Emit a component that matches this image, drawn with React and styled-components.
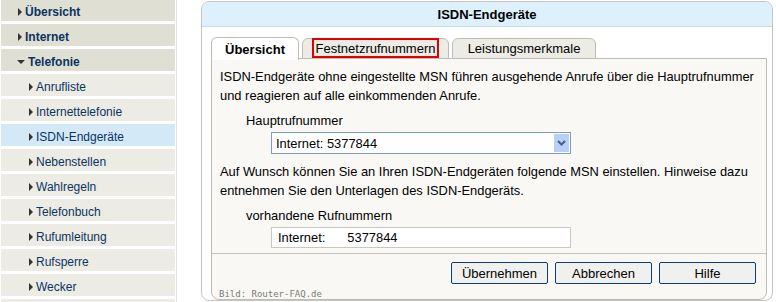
import React from 'react';
import styled, { createGlobalStyle } from 'styled-components';

const GlobalStyle = createGlobalStyle`
    html, body {
        margin: 0;
        padding: 0;
        background: #ffffff;
        overflow: hidden;
    }
    body {
        font-family: "Liberation Sans", Arial, sans-serif;
        font-size: 12px;
    }
`;

const Page = styled.div`
    display: flex;
    align-items: flex-start;
    width: 776px;
    height: 302px;
    overflow: hidden;
`;

const Sidebar = styled.nav`
    width: 174px;
    margin: -1px 0 0 1px;
    padding-right: 1px;
    border-right: 1px solid #e2e2da;
    display: flex;
    flex-direction: column;
    gap: 3px;
`;

const NavRow = styled.div`
    height: 22px;
    display: flex;
    align-items: center;
    padding: 3px 0 0 ${({ $sub }) => ($sub ? '28px' : '17px')};
    background: ${({ $sub, $active }) => ($active ? '#d3e9f8' : $sub ? '#ecebe4' : '#dfdfd3')};
    color: #0b3363;
    font-weight: ${({ $sub }) => ($sub ? 'normal' : 'bold')};
    font-size: 12px;
    box-sizing: border-box;
`;

const Arrow = styled.span`
    width: 0;
    height: 0;
    margin-right: 3px;
    ${({ $open }) => $open
        ? `border-left: 4px solid transparent; border-right: 4px solid transparent; border-top: 4px solid #333; margin-left: -1px;`
        : `border-top: 4px solid transparent; border-bottom: 4px solid transparent; border-left: 4px solid #333;`}
`;

const Panel = styled.section`
    margin: 1px 0 0 24px;
    width: 572px;
    height: 300px;
    box-sizing: border-box;
    border: 1px solid #c6c6c0;
    border-radius: 8px;
    background: #ffffff;
    display: flex;
    flex-direction: column;
    overflow: hidden;
`;

const PanelHeader = styled.header`
    height: 24px;
    background: #ddf0fb;
    border-bottom: 1px solid #c9dbe6;
    display: flex;
    align-items: center;
    justify-content: center;
    font-weight: bold;
    font-size: 13px;
    color: #000;
    flex-shrink: 0;
`;

const PanelBody = styled.div`
    padding: 10px 5px 1px 9px;
    flex: 1;
    display: flex;
    flex-direction: column;
`;

const TabBar = styled.div`
    display: flex;
    gap: 3px;
    height: 22px;
    position: relative;
    z-index: 1;
    margin-bottom: -1px;
`;

const Tab = styled.div`
    width: ${({ $w }) => $w}px;
    height: ${({ $active }) => ($active ? '23px' : '21px')};
    margin-top: ${({ $active }) => ($active ? '0' : '1px')};
    box-sizing: border-box;
    border: 1px solid #bdbdb5;
    border-bottom: ${({ $active }) => ($active ? 'none' : '1px solid #bdbdb5')};
    border-radius: 6px 6px 0 0;
    background: ${({ $active }) => ($active ? '#ffffff' : '#ecebe4')};
    display: flex;
    align-items: center;
    justify-content: center;
    font-size: 13px;
    font-weight: ${({ $active }) => ($active ? 'bold' : 'normal')};
    color: #000;
`;

const Highlight = styled.span`
    border: 2px solid #e00000;
    padding: 1px 2px;
    height: 20px;
    box-sizing: border-box;
    display: flex;
    align-items: center;
    margin-top: -1px;
`;

const TabFrame = styled.div`
    flex: 1;
    border: 1px solid #bdbdb5;
    border-radius: 0 0 8px 8px;
    background: #f9f8f5;
    display: flex;
    flex-direction: column;
`;

const TabContent = styled.div`
    height: 195px;
    box-sizing: border-box;
    border-bottom: 1px solid #c4c4bc;
    padding: 8px 2px 0 8px;
    font-size: 12.9px;
    line-height: 19px;
    color: #000;
`;

const Paragraph = styled.p`
    margin: ${({ $gap }) => ($gap ? '8px 0 0' : '0')};
`;

const FieldLabel = styled.div`
    margin: 6px 0 0 26px;
`;

const Select = styled.div`
    margin: 2px 0 0 51px;
    width: 300px;
    height: 22px;
    box-sizing: border-box;
    border: 1px solid #7f9db9;
    background: #fff;
    display: flex;
    align-items: center;
    padding-left: 4px;
    justify-content: space-between;
`;

const SelectButton = styled.div`
    width: 15px;
    height: 18px;
    margin-right: 1px;
    background: #b9d0f6;
    display: flex;
    align-items: center;
    justify-content: center;
`;

const ReadOnlyBox = styled.div`
    margin: 2px 0 0 51px;
    width: 300px;
    height: 21px;
    box-sizing: border-box;
    border: 1px solid #c8c8c2;
    background: #fff;
    display: flex;
    align-items: center;
    padding-left: 6px;
    gap: 22px;
`;

const Footer = styled.div`
    flex: 1;
    display: flex;
    flex-direction: column;
    padding: 8px 10px 0 7px;
`;

const ButtonRow = styled.div`
    display: flex;
    justify-content: flex-end;
    gap: 7px;
`;

const Button = styled.button`
    width: 97px;
    height: 22px;
    border: 1px solid #0c3d73;
    border-radius: 2px;
    background: #f0f0ee;
    font-family: "Liberation Sans", Arial, sans-serif;
    font-size: 13px;
    color: #000;
    padding: 0;
`;

const Credit = styled.div`
    margin-top: 5px;
    font-family: "DejaVu Sans Mono", monospace;
    font-size: 9px;
    color: #7a7a7a;
`;

const navItems = [
    { label: 'Übersicht' },
    { label: 'Internet' },
    { label: 'Telefonie', open: true },
    { label: 'Anrufliste', sub: true },
    { label: 'Internettelefonie', sub: true },
    { label: 'ISDN-Endgeräte', sub: true, active: true },
    { label: 'Nebenstellen', sub: true },
    { label: 'Wahlregeln', sub: true },
    { label: 'Telefonbuch', sub: true },
    { label: 'Rufumleitung', sub: true },
    { label: 'Rufsperre', sub: true },
    { label: 'Wecker', sub: true },
];

const Chevron = () => (
    <svg width="9" height="6" viewBox="0 0 9 6">
        <path d="M1 1 L4.5 4.5 L8 1" fill="none" stroke="#4a5d82" strokeWidth="2" />
    </svg>
);

export default function App() {
    return (
        <Page>
            <GlobalStyle />
            <Sidebar>
                {navItems.map((item) => (
                    <NavRow key={item.label} $sub={item.sub} $active={item.active}>
                        <Arrow $open={item.open} />
                        {item.label}
                    </NavRow>
                ))}
                <NavRow $sub />
            </Sidebar>
            <Panel>
                <PanelHeader>ISDN-Endgeräte</PanelHeader>
                <PanelBody>
                    <TabBar>
                        <Tab $w={88} $active>Übersicht</Tab>
                        <Tab $w={147}><Highlight>Festnetzrufnummern</Highlight></Tab>
                        <Tab $w={144}>Leistungsmerkmale</Tab>
                    </TabBar>
                    <TabFrame>
                        <TabContent>
                            <Paragraph>
                                ISDN-Endgeräte ohne eingestellte MSN führen ausgehende Anrufe über die Hauptrufnummer
                                und reagieren auf alle einkommenden Anrufe.
                            </Paragraph>
                            <FieldLabel>Hauptrufnummer</FieldLabel>
                            <Select>
                                <span>Internet: 5377844</span>
                                <SelectButton><Chevron /></SelectButton>
                            </Select>
                            <Paragraph $gap>
                                Auf Wunsch können Sie an Ihren ISDN-Endgeräten folgende MSN einstellen. Hinweise dazu
                                entnehmen Sie den Unterlagen des ISDN-Endgeräts.
                            </Paragraph>
                            <FieldLabel>vorhandene Rufnummern</FieldLabel>
                            <ReadOnlyBox>
                                <span>Internet:</span>
                                <span>5377844</span>
                            </ReadOnlyBox>
                        </TabContent>
                        <Footer>
                            <ButtonRow>
                                <Button>Übernehmen</Button>
                                <Button>Abbrechen</Button>
                                <Button>Hilfe</Button>
                            </ButtonRow>
                            <Credit>Bild: Router-FAQ.de</Credit>
                        </Footer>
                    </TabFrame>
                </PanelBody>
            </Panel>
        </Page>
    );
}
